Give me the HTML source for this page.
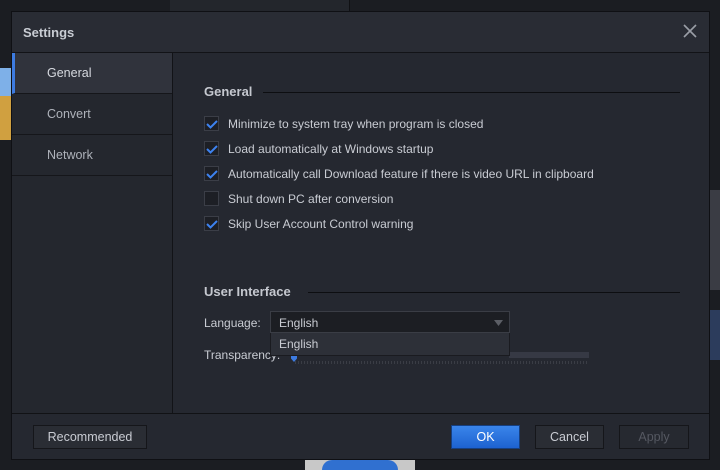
<!DOCTYPE html>
<html><head><style>
*{margin:0;padding:0;box-sizing:border-box}
body{width:720px;height:470px;background:#1b1d22;font-family:"Liberation Sans","DejaVu Sans",sans-serif;font-size:12px;color:#c9ccd3;position:relative;overflow:hidden}
.abs{position:absolute}
.dlg{left:11px;top:11px;width:699px;height:449px;background:#252830;border:1px solid #0f1014}
.title{left:0;top:0;width:697px;height:41px;background:#292c34;border-bottom:1px solid #121317}
.side{left:0;top:41px;width:161px;height:360px;background:#24272e;border-right:1px solid #121317}
.item{position:absolute;left:0;width:160px;height:41px;border-bottom:1px solid #15161a;padding-left:35px;line-height:40px;font-size:12.5px;color:#aeb2ba}
.sel{background:#30333c;color:#d6d9df;border-left:3px solid #3d7be0;padding-left:32px}
.cb{position:absolute;left:192px;width:15px;height:15px;border:1px solid #3b3e47;background:#1d1f25}
.lbl{position:absolute;left:216px;font-size:12px;color:#c9ccd3}
.h{position:absolute;left:192px;font-weight:bold;font-size:13px;color:#c5c8cf}
.line{position:absolute;height:1px;background:#0d0e11}
.btn{position:absolute;top:425px;height:24px;border:1px solid #15161a;background:#2a2d34;text-align:center;line-height:22px;font-size:12.5px;color:#c9ccd3}
</style></head><body>
<div class="abs" style="left:170px;top:0;width:180px;height:11px;background:#23262c;border-right:1px solid #101114"></div>
<div class="abs" style="left:0;top:68px;width:11px;height:72px;background:#d0a040"></div>
<div class="abs" style="left:0;top:68px;width:11px;height:28px;background:#7eb0e8"></div>
<div class="abs" style="left:710px;top:190px;width:10px;height:100px;background:#3a3c44"></div>
<div class="abs" style="left:710px;top:310px;width:10px;height:50px;background:#2c3c5c"></div>
<div class="abs" style="left:305px;top:460px;width:110px;height:10px;background:#c8c8c8"></div>
<div class="abs" style="left:322px;top:460px;width:76px;height:10px;background:#3070d0;border-radius:40px 40px 0 0"></div>
<div class="abs dlg">
 <div class="abs title"><span class="abs" style="left:11px;top:13px;font-weight:bold;font-size:13px;color:#c8ccd3">Settings</span>
 <svg class="abs" style="left:671px;top:12px" width="14" height="14"><path d="M1 1L13 13M13 1L1 13" stroke="#9a9ea6" stroke-width="1.6"/></svg></div>
 <div class="abs side">
  <div class="item sel" style="top:0">General</div>
  <div class="item" style="top:41px">Convert</div>
  <div class="item" style="top:82px">Network</div>
 </div>
 <div class="h" style="top:72px">General</div><div class="line" style="left:251px;width:417px;top:80px"></div>
 <div class="cb" style="top:104px"></div><div class="lbl" style="top:105px">Minimize to system tray when program is closed</div>
 <div class="cb" style="top:129px"></div><div class="lbl" style="top:130px">Load automatically at Windows startup</div>
 <div class="cb" style="top:154px"></div><div class="lbl" style="top:155px">Automatically call Download feature if there is video URL in clipboard</div>
 <div class="cb" style="top:179px"></div><div class="lbl" style="top:180px">Shut down PC after conversion</div>
 <div class="cb" style="top:204px"></div><div class="lbl" style="top:205px">Skip User Account Control warning</div>
 <svg class="abs" style="left:194px;top:106px" width="12" height="120"><g fill="none" stroke="#3d82f0" stroke-width="2"><path d="M1 6L4.5 9.5L11 3"/><path d="M1 31L4.5 34.5L11 28"/><path d="M1 56L4.5 59.5L11 53"/><path d="M1 106L4.5 109.5L11 103"/></g></svg>
 <div class="h" style="top:272px">User Interface</div><div class="line" style="left:296px;width:372px;top:280px"></div>
 <div class="lbl" style="left:192px;top:304px">Language:</div>
 <div class="abs" style="left:258px;top:299px;width:240px;height:22px;background:#1c1e23;border:1px solid #3a3d45"><span class="abs" style="left:8px;top:4px;font-size:12px;color:#c9ccd3">English</span><svg class="abs" style="left:223px;top:8px" width="9" height="6"><path d="M0 0H9L4.5 6Z" fill="#5c5f66"/></svg></div>
 <div class="lbl" style="left:192px;top:336px">Transparency:</div>
 <div class="abs" style="left:497px;top:340px;width:80px;height:6px;background:#363944"></div>
 <div class="abs" style="left:283px;top:349px;width:294px;height:3px;background:repeating-linear-gradient(90deg,#3a3d45 0 1px,transparent 1px 3px)"></div>
 <div class="abs" style="left:279px;top:343px;width:6px;height:7px;background:#3d7be0;clip-path:polygon(0 0,100% 0,100% 50%,50% 100%,0 50%)"></div>
 <div class="abs" style="left:258px;top:321px;width:240px;height:23px;background:#2d3038;border:1px solid #1a1b20;border-top:none"><span class="abs" style="left:8px;top:4px;font-size:12px;color:#c9ccd3">English</span></div>
 <div class="line" style="left:0;width:697px;top:401px;background:#111215"></div>
</div>
<div class="btn" style="left:33px;width:114px">Recommended</div>
<div class="btn" style="left:451px;width:69px;background:linear-gradient(#3a85ea,#1d62d0);border-color:#163f80;color:#fff">OK</div>
<div class="btn" style="left:535px;width:69px">Cancel</div>
<div class="btn" style="left:619px;width:70px;color:#555861;background:#262930">Apply</div>
</body></html>
